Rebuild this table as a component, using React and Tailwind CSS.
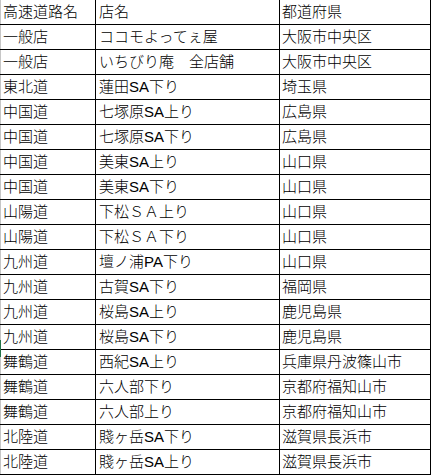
import React from "react";

const rows = [
  ["高速道路名", "店名", "都道府県"],
  ["一般店", "ココモよってぇ屋", "大阪市中央区"],
  ["一般店", "いちびり庵　全店舗", "大阪市中央区"],
  ["東北道", "蓮田SA下り", "埼玉県"],
  ["中国道", "七塚原SA上り", "広島県"],
  ["中国道", "七塚原SA下り", "広島県"],
  ["中国道", "美東SA上り", "山口県"],
  ["中国道", "美東SA下り", "山口県"],
  ["山陽道", "下松ＳＡ上り", "山口県"],
  ["山陽道", "下松ＳＡ下り", "山口県"],
  ["九州道", "壇ノ浦PA下り", "山口県"],
  ["九州道", "古賀SA下り", "福岡県"],
  ["九州道", "桜島SA上り", "鹿児島県"],
  ["九州道", "桜島SA下り", "鹿児島県"],
  ["舞鶴道", "西紀SA上り", "兵庫県丹波篠山市"],
  ["舞鶴道", "六人部下り", "京都府福知山市"],
  ["舞鶴道", "六人部上り", "京都府福知山市"],
  ["北陸道", "賤ヶ岳SA下り", "滋賀県長浜市"],
  ["北陸道", "賤ヶ岳SA上り", "滋賀県長浜市"],
];

export default function App() {
  return (
    <div
      className="relative w-[432px] h-[475px] bg-white text-black text-[15px] font-light overflow-hidden"
      style={{ fontFamily: '"Liberation Sans", "Noto Sans CJK JP", sans-serif' }}
    >
      <div className="w-[431px]">
        {rows.map((r, i) => (
          <div
            key={i}
            className="grid grid-cols-[96px_184px_151px] h-[25px] border-b border-black"
          >
            <div className="border-l border-l-[#c6c6c6] border-r border-r-black pl-[2px] leading-[24px] whitespace-nowrap overflow-hidden">
              {r[0]}
            </div>
            <div className="border-r border-black pl-[3px] leading-[24px] whitespace-nowrap overflow-hidden">
              {r[1]}
            </div>
            <div className="border-r border-black pl-[2px] leading-[24px] whitespace-nowrap overflow-hidden">
              {r[2]}
            </div>
          </div>
        ))}
      </div>
      <div className="absolute left-0 top-[340px] w-[1px] h-[17px] bg-[#217346]" />
    </div>
  );
}
